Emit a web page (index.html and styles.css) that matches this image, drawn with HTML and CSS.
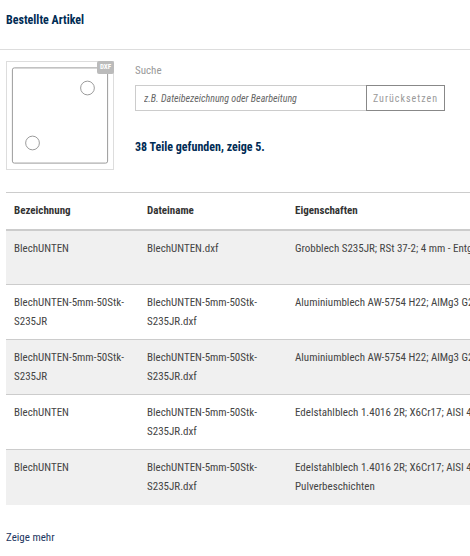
FILE: index.html
```html
<!DOCTYPE html>
<html lang="de">
<head>
	<meta charset="utf-8">
	<meta name="viewport" content="width=device-width, initial-scale=1.0">
	<title>Bestellte Artikel</title>
	<link rel="stylesheet" href="styles.css">
</head>
<body>
<h2 class="titel">Bestellte Artikel</h2>
<main>
	<div class="kopf">
		<div class="vorschau">
			<svg viewBox="0 0 108 108" fill="none" stroke="#999">
				<rect x="5.5" y="5.5" width="97" height="97" rx="2"/>
				<circle cx="82" cy="26" r="7"/>
				<circle cx="26" cy="82" r="7"/>
			</svg>
			<span class="badge">DXF</span>
		</div>
		<form class="suche" onsubmit="return false">
			<label for="suche">Suche</label>
			<div class="feld">
				<input type="text" id="suche" placeholder="z.B. Dateibezeichnung oder Bearbeitung">
				<button type="reset">Zurücksetzen</button>
			</div>
			<h3>38 Teile gefunden, zeige 5.</h3>
		</form>
	</div>
	<div class="liste">
		<table>
			<thead>
				<tr>
					<th class="bez">Bezeichnung</th>
					<th class="datei">Dateiname</th>
					<th>Eigenschaften</th>
				</tr>
			</thead>
			<tbody>
				<tr>
					<td>BlechUNTEN</td>
					<td>BlechUNTEN.dxf</td>
					<td>Grobblech S235JR; RSt 37-2; 4 mm - Entgraten</td>
				</tr>
				<tr>
					<td>BlechUNTEN-5mm-50Stk-<br>S235JR</td>
					<td>BlechUNTEN-5mm-50Stk-<br>S235JR.dxf</td>
					<td>Aluminiumblech AW-5754 H22; AlMg3 G22</td>
				</tr>
				<tr>
					<td>BlechUNTEN-5mm-50Stk-<br>S235JR</td>
					<td>BlechUNTEN-5mm-50Stk-<br>S235JR.dxf</td>
					<td>Aluminiumblech AW-5754 H22; AlMg3 G22</td>
				</tr>
				<tr>
					<td>BlechUNTEN</td>
					<td>BlechUNTEN-5mm-50Stk-<br>S235JR.dxf</td>
					<td>Edelstahlblech 1.4016 2R; X6Cr17; AISI 430</td>
				</tr>
				<tr>
					<td>BlechUNTEN</td>
					<td>BlechUNTEN-5mm-50Stk-<br>S235JR.dxf</td>
					<td>Edelstahlblech 1.4016 2R; X6Cr17; AISI 430<br>Pulverbeschichten</td>
				</tr>
			</tbody>
		</table>
	</div>
	<a href="#" class="mehr">Zeige mehr</a>
</main>
</body>
</html>
```
FILE: styles.css
```css
*{
	box-sizing:border-box;
}
body{
	margin:0;
	background:white;
	color:#444;
	font:11px/19px "Roboto Condensed", "Liberation Sans Narrow", Roboto, sans-serif;
}
h2,h3{
	margin:0;
	font-size:12px;
	line-height:20px;
	color:#002b54;
}
.titel{
	padding:10px 6px 19px;
	border-bottom:1px solid #ddd;
}
main{
	padding:11px 0 0 6px;
}
.kopf{
	display:flex;
	gap:21px;
	padding-right:25px;
}
.vorschau{
	position:relative;
	flex:none;
	width:108px;
	height:109px;
	border:1px solid #ddd;
}
.vorschau svg{
	display:block;
	width:100%;
	height:100%;
}
.badge{
	position:absolute;
	top:-1px;
	right:-1px;
	width:17px;
	border-radius:2px;
	background:#bbb;
	color:white;
	font-size:7px;
	font-weight:bold;
	line-height:13px;
	text-align:center;
}
.suche{
	flex:1;
	min-width:0;
}
.suche label{
	display:block;
	margin-bottom:5px;
	color:#999;
}
.feld{
	display:flex;
	margin-bottom:26px;
}
.feld input{
	flex:1;
	min-width:0;
	height:26px;
	padding:0 8px;
	border:1px solid #ccc;
	border-right:none;
	border-radius:0;
	font:italic 10px "Roboto Condensed", "Liberation Sans Narrow", Roboto, sans-serif;
	color:#444;
}
.feld input::placeholder{
	color:#666;
	opacity:1;
}
.feld button{
	height:26px;
	padding:0 6px;
	border:1px solid #888;
	background:white;
	color:#999;
	font:10px "Roboto Condensed", "Liberation Sans Narrow", Roboto, sans-serif;
	letter-spacing:1px;
}
.liste{
	margin-top:22px;
	overflow:hidden;
}
table{
	width:100%;
	min-width:560px;
	table-layout:fixed;
	border-collapse:collapse;
}
th,td{
	padding:8px;
	border-top:1px solid #ccc;
	text-align:left;
	vertical-align:top;
}
th{
	height:37px;
	color:#333;
	border-bottom:2px solid #ccc;
}
td{
	height:55px;
}
.bez{
	width:133px;
}
.datei{
	width:148px;
}
tbody tr:nth-child(odd){
	background:#f0f0f0;
}
.mehr{
	display:inline-block;
	margin-top:23px;
	color:#1c3660;
	text-decoration:none;
}
```
